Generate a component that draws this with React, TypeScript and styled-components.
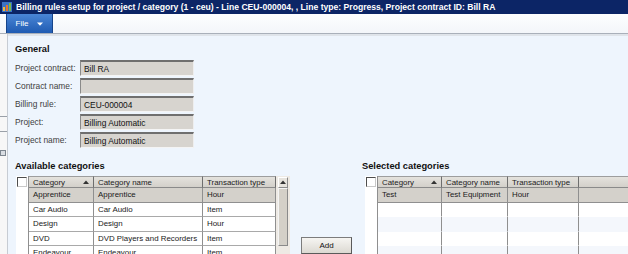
import React from "react";
import styled, { createGlobalStyle } from "styled-components";

const Global = createGlobalStyle`
  html, body { margin: 0; padding: 0; background: #ffffff; }
  body { font-family: "Liberation Sans", Arial, sans-serif; }
  * { box-sizing: border-box; }
`;

const Window = styled.div`
  width: 628px;
  height: 254px;
  overflow: hidden;
  display: flex;
  flex-direction: column;
  background: #eef5fd;
`;

const TitleBar = styled.div`
  height: 14px;
  flex: none;
  display: flex;
  align-items: center;
  gap: 4px;
  padding-left: 2px;
  background: #0c2566;
  color: #ffffff;
  font-weight: bold;
  font-size: 8.6px;
  white-space: nowrap;
`;

const Toolbar = styled.div`
  height: 20px;
  flex: none;
  display: flex;
  align-items: stretch;
  padding-left: 6px;
  background: linear-gradient(#fdfeff, #f3f6fa);
  border-bottom: 1px solid #a9b0ba;
`;

const FileButton = styled.div`
  width: 47px;
  display: flex;
  align-items: center;
  justify-content: center;
  gap: 9px;
  color: #ffffff;
  font-size: 8px;
  background: linear-gradient(#4a86d6, #1f5bb2);
  border-right: 1px solid #16448a;
  border-left: 1px solid #16448a;
`;

const Body = styled.div`
  flex: 1;
  display: flex;
  min-height: 0;
`;

const SideStrip = styled.div`
  width: 8px;
  flex: none;
  background: #f7f7f7;
  border-right: 1px solid #c7ccd3;
  display: flex;
  flex-direction: column;
  padding-top: 82px;
`;

const StripLine = styled.div<{ $gap: number }>`
  height: 1px;
  background: #9aa0a8;
  margin-bottom: ${(p) => p.$gap}px;
`;

const StripIcon = styled.div`
  width: 6px;
  height: 6px;
  border: 1px solid #7d8690;
  background: #d9dde2;
`;

const Content = styled.div`
  flex: 1;
  display: flex;
  flex-direction: column;
  padding: 0 0 0 7px;
  border-top: 2px solid #dfe4ea;
  color: #1b1b1b;
`;

const Heading = styled.div<{ $top?: number; $bottom?: number }>`
  font-weight: bold;
  font-size: 9.3px;
  color: #111;
  height: 12px;
  line-height: 12px;
  margin-top: ${(p) => p.$top ?? 0}px;
  margin-bottom: ${(p) => p.$bottom ?? 0}px;
`;

const Form = styled.div`
  display: grid;
  grid-template-columns: 65px 114px;
  row-gap: 2px;
  margin-top: 5px;
  font-size: 8.4px;
`;

const Label = styled.div`
  height: 16px;
  display: flex;
  align-items: center;
  color: #404040;
`;

const Field = styled.div`
  height: 16px;
  display: flex;
  align-items: center;
  padding-left: 3px;
  background: #d7d4cf;
  border-top: 2px solid #6f6f6f;
  border-left: 1px solid #8a8a8a;
  border-right: 1px solid #eeeeee;
  border-bottom: 1px solid #f4f4f4;
  color: #111;
`;

const Lower = styled.div`
  display: flex;
  align-items: flex-start;
  margin-top: 12px;
  font-size: 7.9px;
`;

const Panel = styled.div`
  display: flex;
  flex-direction: column;
`;

const AddButton = styled.div`
  flex: none;
  width: 51px;
  height: 17px;
  margin: 77px 10px 0 11px;
  display: flex;
  align-items: center;
  justify-content: center;
  background: linear-gradient(#f6f5f2, #dcd9d2);
  border: 1px solid #7c7c7c;
  border-right-color: #5a5a5a;
  border-bottom-color: #5a5a5a;
  color: #111;
  font-size: 8px;
`;

const Grid = styled.div<{ $cols: string; $offset: number }>`
  display: grid;
  grid-template-columns: ${(p) => p.$cols};
  margin-left: ${(p) => p.$offset}px;
`;

const CheckCell = styled.div<{ $head?: boolean }>`
  background: #ffffff;
  border-right: 1px solid #8f8f8f;
  height: ${(p) => (p.$head ? 12 : 14.5)}px;
  display: flex;
  align-items: flex-start;
  padding: 1px 0 0 1px;
`;

const CheckBox = styled.div`
  width: 10px;
  height: 10px;
  border: 1px solid #4d4d4d;
  border-right-color: #c8c8c8;
  border-bottom-color: #c8c8c8;
  background: #fff;
`;

const HeadCell = styled.div`
  height: 12px;
  display: flex;
  align-items: center;
  justify-content: space-between;
  padding: 0 4px 0 4px;
  background: linear-gradient(#e4e2dd, #d3d0ca);
  border-top: 1px solid #9d9d9d;
  border-right: 1px solid #6e6e6e;
  border-bottom: 1px solid #8a8a8a;
  color: #222;
  white-space: nowrap;
  overflow: hidden;
`;

const Cell = styled.div<{ $sel?: boolean; $alt?: boolean; $lines?: boolean }>`
  height: 14.5px;
  display: flex;
  align-items: center;
  padding-left: 4px;
  white-space: nowrap;
  overflow: hidden;
  color: #1a1a1a;
  background: ${(p) => (p.$sel ? "#d4d1cb" : p.$alt ? "#f4f7fc" : "#ffffff")};
  border-right: 1px solid #8f8f8f;
  border-bottom: 1px solid ${(p) => (p.$sel ? "#8f8f8f" : p.$lines ? "#a9a9a9" : "transparent")};
`;

const ScrollHead = styled.div`
  height: 12px;
  display: flex;
  align-items: center;
  justify-content: center;
  padding: 0 2px 0 2px;
  background: #eeeae4;
`;

const ArrowBtn = styled.div`
  width: 11px;
  height: 11px;
  display: flex;
  align-items: center;
  justify-content: center;
  background: #e6e3dd;
  border: 1px solid #8a8a8a;
  border-top-color: #fff;
  border-left-color: #fff;
`;

const ScrollTrack = styled.div`
  grid-row: span 5;
  background: #eeeae4;
  padding: 0 2px 0 2px;
  display: flex;
`;

const Thumb = styled.div`
  flex: 1;
  height: 58px;
  background: #d4d0c8;
  border: 1px solid #8a8a8a;
  border-top-color: #f4f4f4;
  border-left-color: #f4f4f4;
`;

const SortArrow = () => (
  <svg width="6" height="4" viewBox="0 0 6 4">
    <path d="M0 4 L3 0.5 L6 4 Z" fill="#333" />
  </svg>
);

const AppIcon = () => (
  <svg width="10" height="10" viewBox="0 0 10 10">
    <rect x="0" y="0" width="10" height="10" fill="#3a72c4" />
    <rect x="1" y="5" width="2" height="4" fill="#f2b632" />
    <rect x="4" y="3" width="2" height="6" fill="#e8742b" />
    <rect x="7" y="1" width="2" height="8" fill="#77b84a" />
  </svg>
);

const available = [
  ["Apprentice", "Apprentice", "Hour"],
  ["Car Audio", "Car Audio", "Item"],
  ["Design", "Design", "Hour"],
  ["DVD", "DVD Players and Recorders", "Item"],
  ["Endeavour", "Endeavour", "Item"],
];

const selected: string[][] = [
  ["Test", "Test Equipment", "Hour", ""],
  ["", "", "", ""],
  ["", "", "", ""],
  ["", "", "", ""],
  ["", "", "", ""],
];

const fields = [
  ["Project contract:", "Bill RA"],
  ["Contract name:", ""],
  ["Billing rule:", "CEU-000004"],
  ["Project:", "Billing Automatic"],
  ["Project name:", "Billing Automatic"],
];

export default function App() {
  return (
    <>
      <Global />
      <Window>
        <TitleBar>
          <AppIcon />
          Billing rules setup for project / category (1 - ceu) - Line CEU-000004, , Line type: Progress, Project contract ID: Bill RA
        </TitleBar>
        <Toolbar>
          <FileButton>
            <span>File</span>
            <svg width="6" height="4" viewBox="0 0 6 4">
              <path d="M0 0.5 L6 0.5 L3 3.8 Z" fill="#ffffff" />
            </svg>
          </FileButton>
        </Toolbar>
        <Body>
          <SideStrip>
            <StripLine $gap={14} />
            <StripLine $gap={18} />
            <StripIcon />
          </SideStrip>
          <Content>
            <Heading $top={7}>General</Heading>
            <Form>
              {fields.map(([l, v]) => (
                <React.Fragment key={l}>
                  <Label>{l}</Label>
                  <Field>{v}</Field>
                </React.Fragment>
              ))}
            </Form>
            <Lower>
              <Panel>
                <Heading $bottom={4}>Available categories</Heading>
                <Grid $cols="13px 65px 109px 73px 14px" $offset={1}>
                  <CheckCell $head>
                    <CheckBox />
                  </CheckCell>
                  <HeadCell>
                    Category <SortArrow />
                  </HeadCell>
                  <HeadCell>Category name</HeadCell>
                  <HeadCell>Transaction type</HeadCell>
                  <ScrollHead>
                    <ArrowBtn>
                      <SortArrow />
                    </ArrowBtn>
                  </ScrollHead>
                  {available.map((r, i) => (
                    <React.Fragment key={r[0]}>
                      <CheckCell />
                      {r.map((c, j) => (
                        <Cell key={j} $sel={i === 0} $lines>
                          {c}
                        </Cell>
                      ))}
                      {i === 0 && (
                        <ScrollTrack>
                          <Thumb />
                        </ScrollTrack>
                      )}
                    </React.Fragment>
                  ))}
                </Grid>
              </Panel>
              <AddButton>Add</AddButton>
              <Panel>
                <Heading $bottom={4}>Selected categories</Heading>
                <Grid $cols="13px 64px 66px 71px 60px" $offset={3}>
                  <CheckCell $head>
                    <CheckBox />
                  </CheckCell>
                  <HeadCell>
                    Category <SortArrow />
                  </HeadCell>
                  <HeadCell>Category name</HeadCell>
                  <HeadCell>Transaction type</HeadCell>
                  <HeadCell />
                  {selected.map((r, i) => (
                    <React.Fragment key={i}>
                      <CheckCell />
                      {r.map((c, j) => (
                        <Cell key={j} $sel={i === 0} $alt={i % 2 === 0 && i > 0}>
                          {c}
                        </Cell>
                      ))}
                    </React.Fragment>
                  ))}
                </Grid>
              </Panel>
            </Lower>
          </Content>
        </Body>
      </Window>
    </>
  );
}
